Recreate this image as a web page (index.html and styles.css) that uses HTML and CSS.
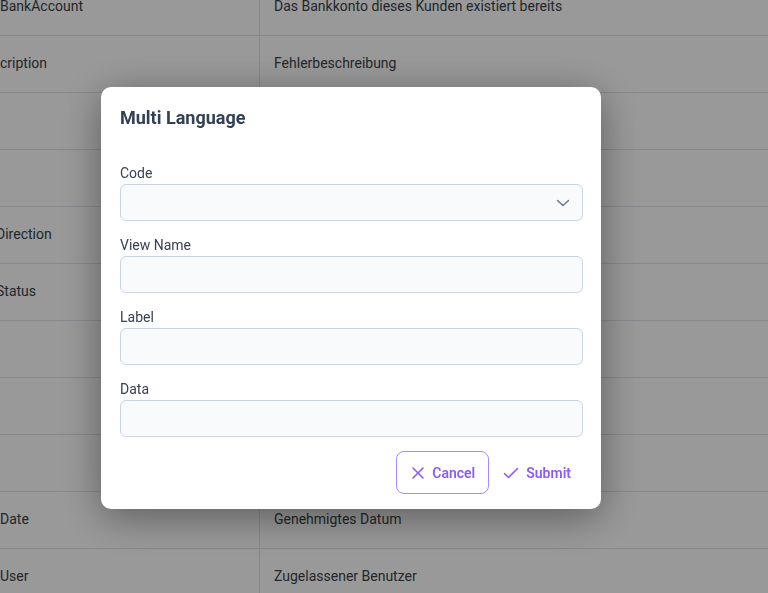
FILE: index.html
```html
<!DOCTYPE html>
<html lang="en">
<head>
  <meta charset="UTF-8" />
  <meta name="viewport" content="width=device-width, initial-scale=1.0" />
  <title>Multi Language</title>
  <link rel="stylesheet" href="styles.css">
</head>
<body>
  <div class="table">
    <div class="row"><div class="cell key">BankAccount</div><div class="cell">Das Bankkonto dieses Kunden existiert bereits</div></div>
    <div class="row"><div class="cell key">cription</div><div class="cell">Fehlerbeschreibung</div></div>
    <div class="row"><div class="cell key"></div><div class="cell">Ereignis</div></div>
    <div class="row"><div class="cell key"></div><div class="cell">Ergebnis</div></div>
    <div class="row"><div class="cell key cut">Direction</div><div class="cell">Richtung</div></div>
    <div class="row"><div class="cell key cut">Status</div><div class="cell">Status</div></div>
    <div class="row"><div class="cell key"></div><div class="cell">Typ</div></div>
    <div class="row"><div class="cell key"></div><div class="cell">Name</div></div>
    <div class="row"><div class="cell key"></div><div class="cell">Datum</div></div>
    <div class="row"><div class="cell key">Date</div><div class="cell">Genehmigtes Datum</div></div>
    <div class="row"><div class="cell key">User</div><div class="cell">Zugelassener Benutzer</div></div>
  </div>

  <div class="overlay">
    <div class="modal">
      <h2>Multi Language</h2>
      <form class="form">
        <label class="field">
          <span>Code</span>
          <div class="select">
            <svg width="16" height="16" viewBox="0 0 16 16" fill="none" stroke="#64748b" stroke-width="1.4" stroke-linecap="round" stroke-linejoin="round"><path d="M2.5 5.5 8 10.5l5.5-5"/></svg>
          </div>
        </label>
        <label class="field">
          <span>View Name</span>
          <input type="text" />
        </label>
        <label class="field">
          <span>Label</span>
          <input type="text" />
        </label>
        <label class="field">
          <span>Data</span>
          <input type="text" />
        </label>
        <div class="actions">
          <button type="button" class="btn outline">
            <svg width="14" height="14" viewBox="0 0 14 14" fill="none" stroke="currentColor" stroke-width="1.6" stroke-linecap="round"><path d="M2 2l10 10M12 2 2 12"/></svg>
            Cancel
          </button>
          <button type="button" class="btn">
            <svg width="16" height="14" viewBox="0 0 16 14" fill="none" stroke="currentColor" stroke-width="1.6" stroke-linecap="round" stroke-linejoin="round"><path d="M1.5 7.5 5.5 11.5 14.5 2.5"/></svg>
            Submit
          </button>
        </div>
      </form>
    </div>
  </div>
</body>
</html>
```

FILE: styles.css
```css
body {
  margin: 0;
  font-family: Roboto, "Liberation Sans", sans-serif;
  color: #374151;
  background: #fff;
  overflow: hidden;
  height: 593px;
}
.table {
  margin-top: -21px;
}
.row {
  display: flex;
  height: 57px;
  border-bottom: 1px solid #dfe3ea;
  box-sizing: border-box;
}
.cell {
  display: flex;
  align-items: center;
  font-size: 14px;
  color: #3a3f47;
  padding-left: 14px;
  padding-bottom: 2px;
  flex: 1;
}
.cell.key {
  flex: 0 0 259px;
  padding-left: 0;
  border-right: 1px solid #dfe3ea;
}
.cell.cut {
  text-indent: -4px;
}

.overlay {
  position: fixed;
  inset: 0;
  background: rgba(0, 0, 0, 0.4);
}
.modal {
  position: absolute;
  left: 101px;
  top: 87px;
  width: 500px;
  box-sizing: border-box;
  background: #fff;
  border-radius: 10px;
  padding: 19px 18px 15px 19px;
  box-shadow: 0 8px 40px rgba(0, 0, 0, 0.4);
}
.modal h2 {
  margin: 0 0 33px;
  font-size: 18px;
  line-height: 24px;
  font-weight: 700;
  color: #334155;
}
.field {
  display: block;
  margin-bottom: 14px;
}
.field span {
  display: block;
  font-size: 14px;
  line-height: 20px;
  color: #374151;
  margin-bottom: 1px;
}
.field input,
.select {
  display: block;
  width: 100%;
  height: 37px;
  box-sizing: border-box;
  border: 1px solid #cbd5e1;
  background: #f8fafc;
  border-radius: 6px;
  font: inherit;
}
.select {
  display: flex;
  align-items: center;
  justify-content: flex-end;
  padding-right: 11px;
}
.actions {
  display: flex;
  justify-content: flex-end;
  gap: 1px;
  margin-top: 3px;
}
.btn {
  display: flex;
  align-items: center;
  gap: 7px;
  height: 43px;
  padding: 0 11px 0 12px;
  border: 1px solid transparent;
  border-radius: 8px;
  background: none;
  color: #8b5cf6;
  font-family: Roboto, "Liberation Sans", sans-serif;
  font-size: 14px;
  font-weight: 600;
  cursor: pointer;
}
.btn.outline {
  border-color: #a78bfa;
  width: 93px;
  padding: 0 13px 0 14px;
}
```
